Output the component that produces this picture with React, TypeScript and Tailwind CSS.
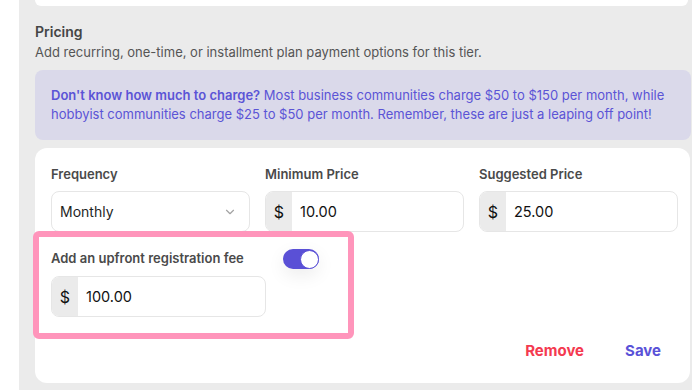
import { ChevronDown } from "lucide-react";

const font = { fontFamily: "Inter, 'Noto Sans', sans-serif" };

export default function App() {
  return (
    <div style={font} className="w-[692px] h-[390px] overflow-hidden bg-white flex">
      <div className="w-[19px] shrink-0" />
      <div className="flex-1 bg-[#ebebeb] pl-4 pr-[1px]">
        <div className="h-[6px] bg-white rounded-b-xl mr-[3px]" />

        <div className="mt-4 text-[14px] leading-5 font-semibold text-[#454545]">Pricing</div>
        <div className="text-[13px] leading-5 text-[#555]">
          Add recurring, one-time, or installment plan payment options for this tier.
        </div>

        <div className="mt-2 rounded-lg bg-[#dad9ea] px-4 py-4 text-[13px] leading-[19px] text-[#5b54d6]">
          <span className="font-semibold">Don't know how much to charge?</span> Most business
          communities charge $50 to $150 per month, while hobbyist communities charge $25 to $50 per
          month. Remember, these are just a leaping off point!
        </div>

        <div className="relative mt-2 mr-[1px] h-[235px] rounded-xl bg-white pl-4 pr-3 pt-[17px]">
          <div className="grid grid-cols-3 gap-x-[15px]">
            <Label>Frequency</Label>
            <Label>Minimum Price</Label>
            <Label>Suggested Price</Label>
            <div className="mt-2 h-[41px] rounded-lg border border-[#e6e6e6] flex items-center pl-2 pr-3 text-[14px] text-[#1f1f1f]">
              <span className="flex-1">Monthly</span>
              <ChevronDown size={14} className="text-[#a3a3a3]" />
            </div>
            <MoneyInput value="10.00" />
            <MoneyInput value="25.00" />
          </div>

          <div className="mt-[17px] flex">
            <div className="w-[215px]">
              <Label>Add an upfront registration fee</Label>
              <MoneyInput value="100.00" mt="mt-[9px]" />
            </div>
            <div className="ml-[17px] h-5 w-9 rounded-full bg-[#5a50d6] flex items-center justify-end shadow-[0_6px_18px_rgba(0,0,0,0.08)]">
              <div className="h-[19px] w-[19px] rounded-full bg-white border border-[#5a50d6]" />
            </div>
          </div>

          <div className="mt-[23px] flex justify-end gap-[41px] pr-[17px] text-[15px] font-bold">
            <button className="text-[#f43a50]">Remove</button>
            <button className="text-[#5a52d8]">Save</button>
          </div>

          <div className="absolute left-[-2px] top-[83px] w-[321px] h-[108px] rounded-md border-[6px] border-[#ff95bb]" />
        </div>
      </div>
    </div>
  );
}

function Label({ children }: { children: React.ReactNode }) {
  return <div className="text-[13px] leading-[18px] font-semibold text-[#4a4a4a]">{children}</div>;
}

function MoneyInput({ value, mt = "mt-2" }: { value: string; mt?: string }) {
  return (
    <div className={`${mt} h-[41px] rounded-lg border border-[#e6e6e6] flex overflow-hidden`}>
      <div className="w-[26px] bg-[#ebebeb] flex items-center justify-center text-[16px] text-[#111]">
        $
      </div>
      <div className="flex items-center pl-2 text-[14.5px] text-[#111]">{value}</div>
    </div>
  );
}
